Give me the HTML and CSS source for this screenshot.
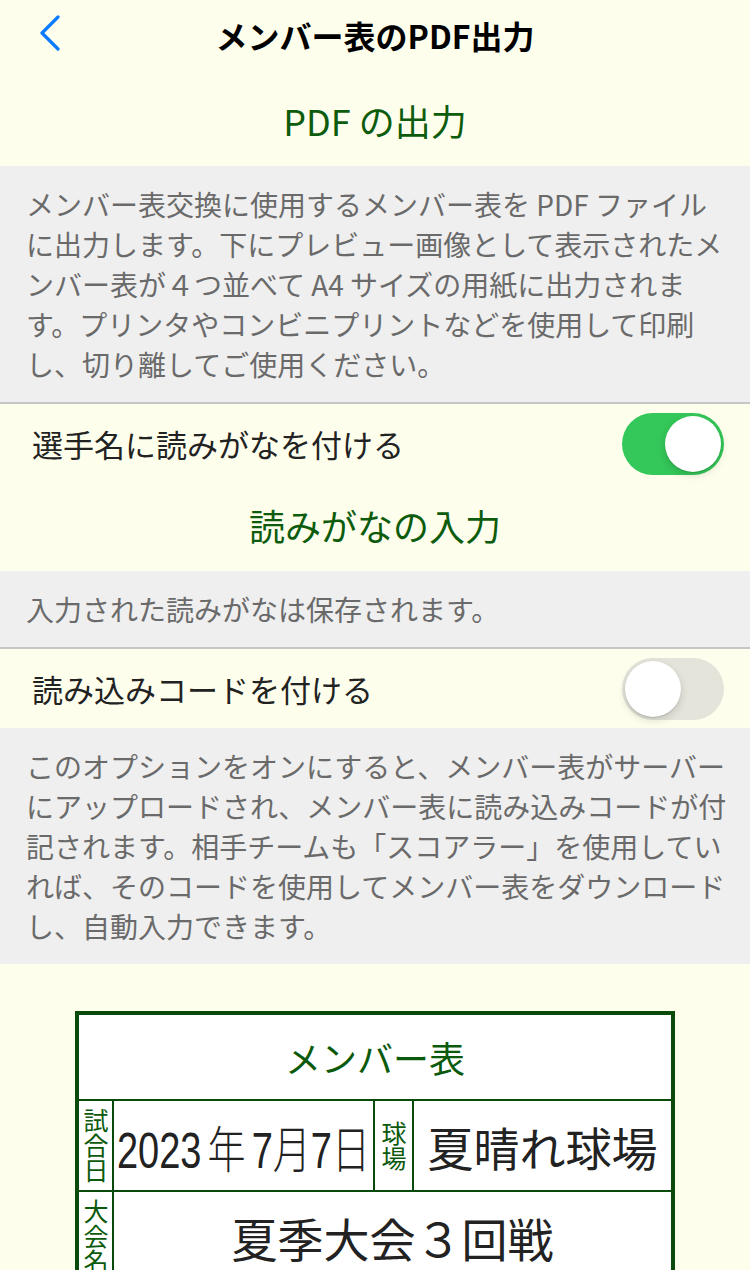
FILE: index.html
```html
<!DOCTYPE html>
<html lang="ja">
<head>
    <meta charset="UTF-8">
    <meta name="viewport" content="width=device-width, initial-scale=1.0">
    <title>メンバー表のPDF出力</title>
    <link rel="stylesheet" href="styles.css">
</head>
<body>
    <header class="navbar">
        <a class="back" href="#" aria-label="戻る">
            <svg width="24" height="36" viewBox="0 0 24 36"><polyline points="20,2 4,18 20,34" fill="none" stroke="#0a7aff" stroke-width="3.2" stroke-linecap="round" stroke-linejoin="round"/></svg>
        </a>
        <h1 class="nav-title">メンバー表のPDF出力</h1>
        <span></span>
    </header>

    <h2 class="section-title section-title-first">PDF の出力</h2>
    <p class="note">メンバー表交換に使用するメンバー表を PDF ファイル<br>に出力します。下にプレビュー画像として表示されたメ<br>ンバー表が４つ並べて A4 サイズの用紙に出力されま<br>す。プリンタやコンビニプリントなどを使用して印刷<br>し、切り離してご使用ください。</p>

    <div class="row">
        <span class="row-label">選手名に読みがなを付ける</span>
        <span class="switch switch-on"></span>
    </div>

    <h2 class="section-title">読みがなの入力</h2>
    <p class="note">入力された読みがなは保存されます。</p>

    <div class="row">
        <span class="row-label">読み込みコードを付ける</span>
        <span class="switch"></span>
    </div>
    <p class="note">このオプションをオンにすると、メンバー表がサーバー<br>にアップロードされ、メンバー表に読み込みコードが付<br>記されます。相手チームも「スコアラー」を使用してい<br>れば、そのコードを使用してメンバー表をダウンロード<br>し、自動入力できます。</p>

    <div class="preview">
        <div class="sheet">
            <div class="sheet-title">メンバー表</div>
            <div class="sheet-row sheet-row-date">
                <div class="cell-label">試合日</div>
                <div class="cell-value"><span class="date-text">2023<span class="date-gap">年</span>7月7日</span></div>
                <div class="cell-label">球場</div>
                <div class="cell-value">夏晴れ球場</div>
            </div>
            <div class="sheet-row sheet-row-wide">
                <div class="cell-label">大会名</div>
                <div class="cell-value">夏季大会３回戦</div>
            </div>
        </div>
    </div>
</body>
</html>
```

FILE: styles.css
```css
body {
    margin: 0;
    background-color: #fefeec;
    font-family: "Noto Sans CJK JP", sans-serif;
    color: #222;
}

.navbar {
    display: grid;
    grid-template-columns: 1fr auto 1fr;
    align-items: center;
    height: 70px;
}
.back {
    display: flex;
    padding-left: 38px;
    margin-top: -4px;
}
.nav-title {
    margin: 0;
    font-size: 32px;
    font-weight: 700;
    line-height: 1;
    color: #000;
}

.section-title {
    margin: 0;
    padding: 18px 0 22px;
    font-size: 36px;
    font-weight: 400;
    line-height: 48px;
    text-align: center;
    color: #0d5c0d;
}
.section-title-first {
    padding: 26px 0 22px;
}

.note {
    margin: 0;
    padding: 18px 16px 18px 26px;
    background-color: #efefef;
    font-size: 28px;
    line-height: 40px;
    color: #6a6a6a;
    white-space: nowrap;
}

.row {
    display: flex;
    align-items: center;
    justify-content: space-between;
    height: 79px;
    padding: 0 26px 0 32px;
    border-top: 2px solid #c6c6c6;
}
.row-label {
    font-size: 31px;
    color: #222;
}

.switch {
    position: relative;
    width: 102px;
    height: 62px;
    border-radius: 31px;
    background-color: #e4e4da;
}
.switch::after {
    content: "";
    position: absolute;
    top: 3px;
    left: 3px;
    width: 56px;
    height: 56px;
    border-radius: 50%;
    background: #fff;
    box-shadow: 0 3px 8px rgba(0, 0, 0, 0.15), 0 1px 1px rgba(0, 0, 0, 0.12);
}
.switch-on {
    background-color: #34c759;
}
.switch-on::after {
    left: auto;
    right: 3px;
}

.preview {
    padding: 47px 0 40px;
}
.sheet {
    width: 592px;
    margin: 0 auto;
    border: 4px solid #0a4a0a;
    background-color: #fff;
}
.sheet-title {
    height: 84px;
    line-height: 84px;
    text-align: center;
    font-size: 36px;
    color: #0b5a0b;
    border-bottom: 2px solid #0a4a0a;
}
.sheet-row {
    display: grid;
    height: 89px;
    border-bottom: 2px solid #0a4a0a;
}
.sheet-row-date {
    grid-template-columns: 35px 261px 39px 1fr;
}
.sheet-row-wide {
    grid-template-columns: 35px 1fr;
}
.cell-label {
    display: flex;
    justify-content: center;
    align-items: center;
    writing-mode: vertical-rl;
    text-orientation: upright;
    font-size: 25px;
    line-height: 1;
    color: #0b5a0b;
    border-right: 2px solid #0a4a0a;
}
.cell-value {
    display: flex;
    justify-content: center;
    align-items: center;
    font-size: 46px;
    color: #222;
    white-space: nowrap;
    overflow: hidden;
}
.sheet-row-date .cell-value:nth-child(2) {
    border-right: 2px solid #0a4a0a;
}
.date-text {
    display: inline-block;
    font-family: "Liberation Sans", "Noto Sans CJK JP", sans-serif;
    font-size: 50px;
    font-weight: 300;
    transform: scaleX(0.76);
}
.date-gap {
    margin: 0 8px;
}
```
